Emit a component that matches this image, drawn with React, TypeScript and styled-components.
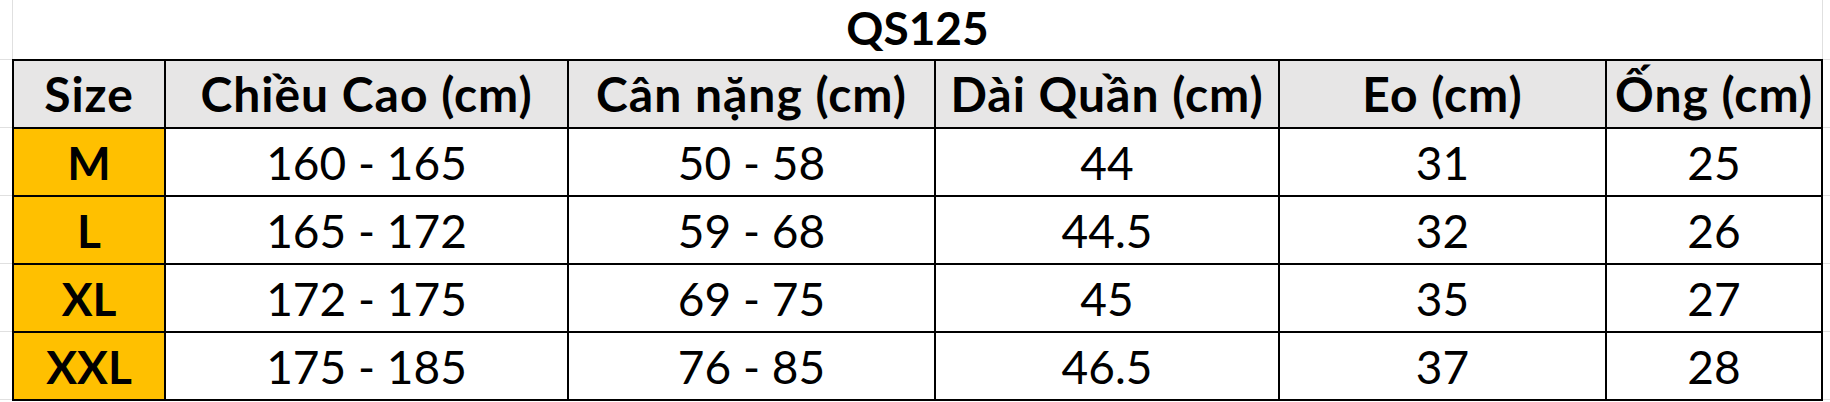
import styled, { createGlobalStyle } from "styled-components";

const GlobalStyle = createGlobalStyle`
  html, body {
    margin: 0;
    padding: 0;
    background: #ffffff;
  }
  body {
    font-family: Lato, "Liberation Sans", sans-serif;
    color: #000000;
  }
`;

const GRID = "#e0e0e0";
const COLS = [150, 401, 365, 342, 325, 214];

const Sheet = styled.div`
  display: grid;
  grid-template-columns: 12px auto 1fr;
  width: 1830px;
  height: 402px;
  overflow: hidden;
`;

const Gutter = styled.div`
  display: flex;
  flex-direction: column;
`;

const GutterCell = styled.div<{ $h: number }>`
  height: ${(p) => p.$h}px;
  border-bottom: 1px solid ${GRID};
  box-sizing: border-box;
  flex: none;
`;

const Main = styled.div`
  display: flex;
  flex-direction: column;
`;

const Title = styled.div`
  height: 59px;
  display: flex;
  align-items: flex-end;
  justify-content: center;
  padding-bottom: 8px;
  box-sizing: border-box;
  border-left: 1px solid ${GRID};
  border-right: 1px solid ${GRID};
  font-size: 46px;
  font-weight: 700;
  line-height: 1;
`;

const Table = styled.div`
  display: grid;
  grid-template-columns: ${COLS.map((c) => `${c}px`).join(" ")};
  grid-auto-rows: 66px;
  gap: 2px;
  padding: 2px;
  background: #000000;
`;

const Cell = styled.div<{ $tone?: "head" | "size" | "plain"; $bold?: boolean }>`
  display: flex;
  align-items: flex-end;
  justify-content: center;
  padding-bottom: 9px;
  box-sizing: border-box;
  white-space: nowrap;
  font-size: ${(p) => (p.$tone === "head" ? 48 : 46)}px;
  letter-spacing: ${(p) => (p.$tone === "head" ? "1px" : "0")};
  line-height: 1;
  font-weight: ${(p) => (p.$bold ? 700 : 400)};
  background: ${(p) =>
    p.$tone === "head" ? "#e7e6e6" : p.$tone === "size" ? "#ffc000" : "#ffffff"};
`;

const headers = [
  "Size",
  "Chiều Cao (cm)",
  "Cân nặng (cm)",
  "Dài Quần (cm)",
  "Eo (cm)",
  "Ống (cm)",
];

const rows = [
  ["M", "160 - 165", "50 - 58", "44", "31", "25"],
  ["L", "165 - 172", "59 - 68", "44.5", "32", "26"],
  ["XL", "172 - 175", "69 - 75", "45", "35", "27"],
  ["XXL", "175 - 185", "76 - 85", "46.5", "37", "28"],
];

function SideGutter() {
  return (
    <Gutter>
      <GutterCell $h={60} />
      {[0, 1, 2, 3, 4].map((i) => (
        <GutterCell key={i} $h={68} />
      ))}
    </Gutter>
  );
}

export default function App() {
  return (
    <>
      <GlobalStyle />
      <Sheet>
        <SideGutter />
        <Main>
          <Title>QS125</Title>
          <Table>
            {headers.map((h) => (
              <Cell key={h} $tone="head" $bold>
                {h}
              </Cell>
            ))}
            {rows.map((r) =>
              r.map((v, i) => (
                <Cell key={r[0] + i} $tone={i === 0 ? "size" : "plain"} $bold={i === 0}>
                  {v}
                </Cell>
              ))
            )}
          </Table>
        </Main>
        <SideGutter />
      </Sheet>
    </>
  );
}
